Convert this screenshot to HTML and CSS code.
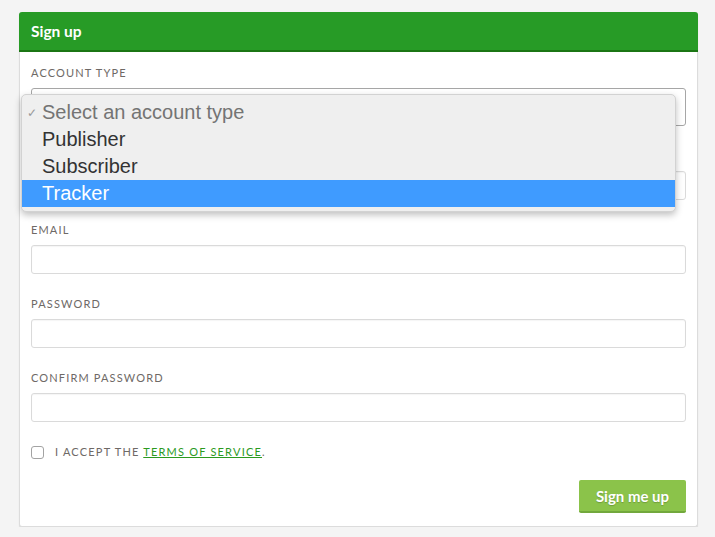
FILE: index.html
```html
<!DOCTYPE html>
<html>
<head>
<meta charset="utf-8">
<link rel="stylesheet" href="styles.css">
</head>
<body>
<div class="card">
  <div class="card-header">Sign up</div>
  <form class="card-body">
    <div class="field">
      <label class="label">Account type</label>
      <div class="select"></div>
    </div>
    <div class="field">
      <label class="label label-covered"></label>
      <div class="input"></div>
    </div>
    <div class="field">
      <label class="label">Email</label>
      <div class="input"></div>
    </div>
    <div class="field">
      <label class="label">Password</label>
      <div class="input"></div>
    </div>
    <div class="field">
      <label class="label">Confirm password</label>
      <div class="input"></div>
    </div>
    <div class="check-row">
      <span class="checkbox"></span>
      <span class="check-text">I accept the <a class="tos">Terms of Service</a>.</span>
    </div>
    <div class="actions">
      <button type="button" class="btn">Sign me up</button>
    </div>
  </form>
  <div class="menu">
    <div class="opt opt-disabled"><span class="tick">✓</span>Select an account type</div>
    <div class="opt">Publisher</div>
    <div class="opt">Subscriber</div>
    <div class="opt opt-active">Tracker</div>
  </div>
</div>
</body>
</html>
```
FILE: styles.css
```css
html, body {
  margin: 0;
  padding: 0;
}
body {
  background: #f4f4f4;
  padding: 12px 17px 0 19px;
  font-family: Lato, "Open Sans", sans-serif;
}
.card {
  position: relative;
  background: #fff;
  border: 1px solid #dcdcdc;
  border-top: 0;
  border-radius: 3px;
  box-shadow: 0 1px 1px rgba(0,0,0,0.12);
  height: 515px;
  box-sizing: border-box;
}
.card-header {
  background: #279b26;
  border-bottom: 2px solid #1b7614;
  border-radius: 3px 3px 0 0;
  color: #fff;
  font-weight: 700;
  font-size: 15.5px;
  height: 38px;
  line-height: 38px;
  padding: 0 12px;
  margin: 0 -1px;
}
.card-body {
  padding: 13px 11px 0 11px;
  display: flex;
  flex-direction: column;
}
.field {
  display: flex;
  flex-direction: column;
  gap: 7px;
  margin-bottom: 22px;
}
.label {
  font-size: 11px;
  line-height: 16px;
  height: 16px;
  letter-spacing: 1.15px;
  text-transform: uppercase;
  color: #6e6966;
}
.select {
  height: 38px;
  box-sizing: border-box;
  border: 1px solid #a6a6a6;
  border-radius: 3px;
  background: #fff;
}
.input {
  height: 29px;
  box-sizing: border-box;
  border: 1px solid #dadada;
  border-radius: 3px;
  background: #fff;
  box-shadow: inset 0 1px 1px rgba(0,0,0,0.04);
}
.check-row {
  display: flex;
  align-items: center;
  height: 16px;
  gap: 11px;
}
.checkbox {
  width: 13px;
  height: 13px;
  box-sizing: border-box;
  border: 1px solid #a3a3a3;
  border-radius: 3px;
  background: #fff;
}
.check-text {
  font-size: 11px;
  line-height: 16px;
  letter-spacing: 1.2px;
  text-transform: uppercase;
  color: #6e6966;
}
.tos {
  color: #2b9a1e;
  text-decoration: underline;
}
.actions {
  display: flex;
  justify-content: flex-end;
  margin-top: 20px;
}
.btn {
  width: 107px;
  height: 33px;
  border: 0;
  border-bottom: 2px solid #72a83c;
  border-radius: 2px;
  background: #8bc34a;
  color: #fff;
  font-family: Lato, "Open Sans", sans-serif;
  font-weight: 700;
  font-size: 15px;
  text-shadow: 0 1px 1px rgba(0,0,0,0.2);
  padding: 0;
}
.menu {
  position: absolute;
  left: 1px;
  top: 82px;
  width: 655px;
  box-sizing: border-box;
  padding: 4px 0 4px;
  background: #efefef;
  border: 1px solid #d2d2d2;
  border-radius: 5px;
  box-shadow: 0 3px 7px rgba(0,0,0,0.25);
  font-family: "Liberation Sans", Arial, sans-serif;
  font-size: 20px;
}
.opt {
  position: relative;
  height: 27px;
  line-height: 26px;
  padding-left: 20px;
  color: #333;
}
.opt-disabled {
  color: #747474;
}
.tick {
  position: absolute;
  left: 5px;
  top: 1px;
  font-size: 12px;
  color: #9a9a9a;
}
.opt-active {
  background: #3f9bff;
  color: #fff;
}
```
